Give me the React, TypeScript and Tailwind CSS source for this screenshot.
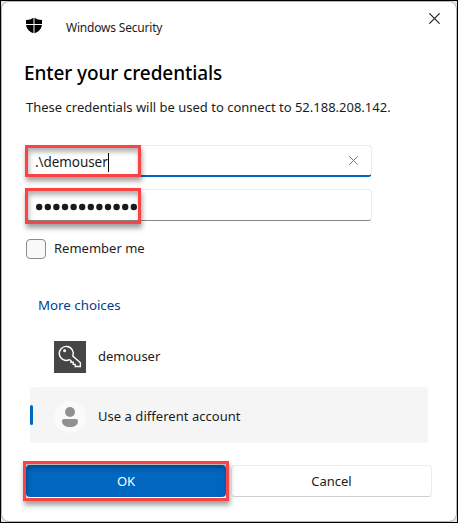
import type { ReactNode } from 'react';

function ShieldIcon() {
  return (
    <svg width="16" height="17" viewBox="0 0 16 17" fill="#000">
      <path d="M0 3 Q4.5 3 7.5 0.7 V7 H0 Z M8.5 0.7 Q11.5 3 16 3 V7 H8.5 Z M0 8 H7.5 V16.3 Q1 14 0 8 Z M8.5 8 H16 Q15 14 8.5 16.3 Z" />
    </svg>
  );
}

function CrossIcon({ size, color }: { size: number; color: string }) {
  return (
    <svg width={size} height={size} viewBox="0 0 10 10" fill="none" stroke={color} strokeWidth="1.1">
      <path d="M0.3 0.3 L9.7 9.7 M9.7 0.3 L0.3 9.7" />
    </svg>
  );
}

function KeyIcon() {
  return (
    <svg width="32" height="32" viewBox="0 0 32 32" fill="none" stroke="#fff" strokeWidth="1.4">
      <path d="M18.8 15 A7 7 0 1 0 15.4 18.7 L17 19.6 V21.3 H19.2 V23.4 H21.2 V25.5 H26.4 V21.8 Z" />
      <circle cx="10.6" cy="9.7" r="1.2" fill="#fff" strokeWidth="0.6" />
    </svg>
  );
}

function PersonIcon() {
  return (
    <svg width="32" height="32" viewBox="0 0 32 32">
      <circle cx="16" cy="16" r="16" fill="#fafafa" />
      <circle cx="16" cy="11" r="5" fill="#919191" />
      <path d="M10 18 H22 Q24 18 24 20 C24 24 20.5 26 16 26 C11.5 26 8 24 8 20 Q8 18 10 18 Z" fill="#919191" />
    </svg>
  );
}

function PasswordDots({ count }: { count: number }) {
  return (
    <svg width="104" height="8" fill="#1a1a1a">
      {Array.from({ length: count }, (_, i) => (
        <circle key={i} cx={3.2 + i * 8.6} cy="4" r="3.2" />
      ))}
    </svg>
  );
}

function Highlight({ className }: { className: string }) {
  return (
    <div
      className={`pointer-events-none absolute border-3 border-[#fb4345] shadow-[1px_4px_5px_rgba(0,0,0,0.38),inset_1px_4px_5px_rgba(0,0,0,0.3)] ${className}`}
    />
  );
}

function Field({ children, className }: { children: ReactNode; className: string }) {
  return (
    <div className={`relative flex h-8 w-[346px] items-center rounded border border-[#ececec] bg-white pr-[13px] pl-[9px] ${className}`}>
      {children}
    </div>
  );
}

export default function App() {
  return (
    <div className="h-[523px] w-[458px] border border-black bg-[#e5e5e5] font-['Noto_Sans','Open_Sans',sans-serif] text-[13px] text-[#1c1c1c]">
      <div className="flex h-full w-full flex-col rounded-lg border border-[#b5b5b5] bg-white pl-6">
        <header className="flex h-12 shrink-0 items-start">
          <span className="mt-[15px] w-10">
            <ShieldIcon />
          </span>
          <span className="mt-[17px] text-[12px] leading-[18px] tracking-[-0.2px]">Windows Security</span>
          <button className="mt-[11px] mr-[16px] ml-auto" aria-label="Close">
            <CrossIcon size={11} color="#222" />
          </button>
        </header>

        <h1 className="mt-[10px] -ml-[2px] h-[27px] text-[19px] leading-[27px] font-[550] tracking-[-0.1px] whitespace-nowrap text-black">
          Enter your credentials
        </h1>
        <p className="mt-[10px] h-5 leading-5 whitespace-nowrap">
          These credentials will be used to connect to 52.188.208.142.
        </p>

        <Field className="mt-[28px] shrink-0 border-b-2 border-b-[#0067c0]">
          <span className="mt-[3px] -ml-px text-[13.5px] leading-5 tracking-[-0.07px]">.\demouser</span>
          <span className="mt-[3px] h-[19px] w-px bg-black" />
          <span className="ml-auto">
            <CrossIcon size={9} color="#777" />
          </span>
          <Highlight className="-top-px -left-[2px] h-8 w-[116px]" />
        </Field>

        <Field className="mt-3 shrink-0 border-b-[#868686]">
          <span className="mt-[3px]">
            <PasswordDots count={12} />
          </span>
          <Highlight className="-top-[2px] -left-[2px] h-9 w-[116px]" />
        </Field>

        <label className="mt-[18px] flex h-5 items-center gap-2">
          <span className="size-5 rounded border border-[#8b8b8b] bg-[#f9f9f9]" />
          <span className="mb-[2px] leading-5">Remember me</span>
        </label>

        <a className="mt-[36px] ml-3 h-5 text-[13.3px] leading-5 text-[#003e92]">More choices</a>

        <div className="mt-[26px] ml-7 flex h-8 items-center gap-3">
          <span className="bg-[#464646]">
            <KeyIcon />
          </span>
          <span className="mb-[2px] leading-5">demouser</span>
        </div>

        <div className="mt-[14px] ml-1 flex h-14 w-[398px] shrink-0 items-center rounded bg-[#f5f5f5]">
          <span className="h-5 w-[3px] rounded-sm bg-[#0067c0]" />
          <span className="mt-[3px] mr-3 ml-[21px]">
            <PersonIcon />
          </span>
          <span className="mt-[2px] leading-5 tracking-[0.04px]">Use a different account</span>
        </div>

        <div className="mt-[22px] flex h-8 gap-[5px]">
          <button className="relative h-8 w-[200px] rounded bg-[#0067c0] pt-[2px] text-white">
            OK
            <Highlight className="-top-1 -left-[3px] h-10 w-[206px]" />
          </button>
          <button className="h-8 w-[201px] rounded border border-[#ececec] border-b-[#cfcfcf] bg-white pt-[2px]">Cancel</button>
        </div>
      </div>
    </div>
  );
}
